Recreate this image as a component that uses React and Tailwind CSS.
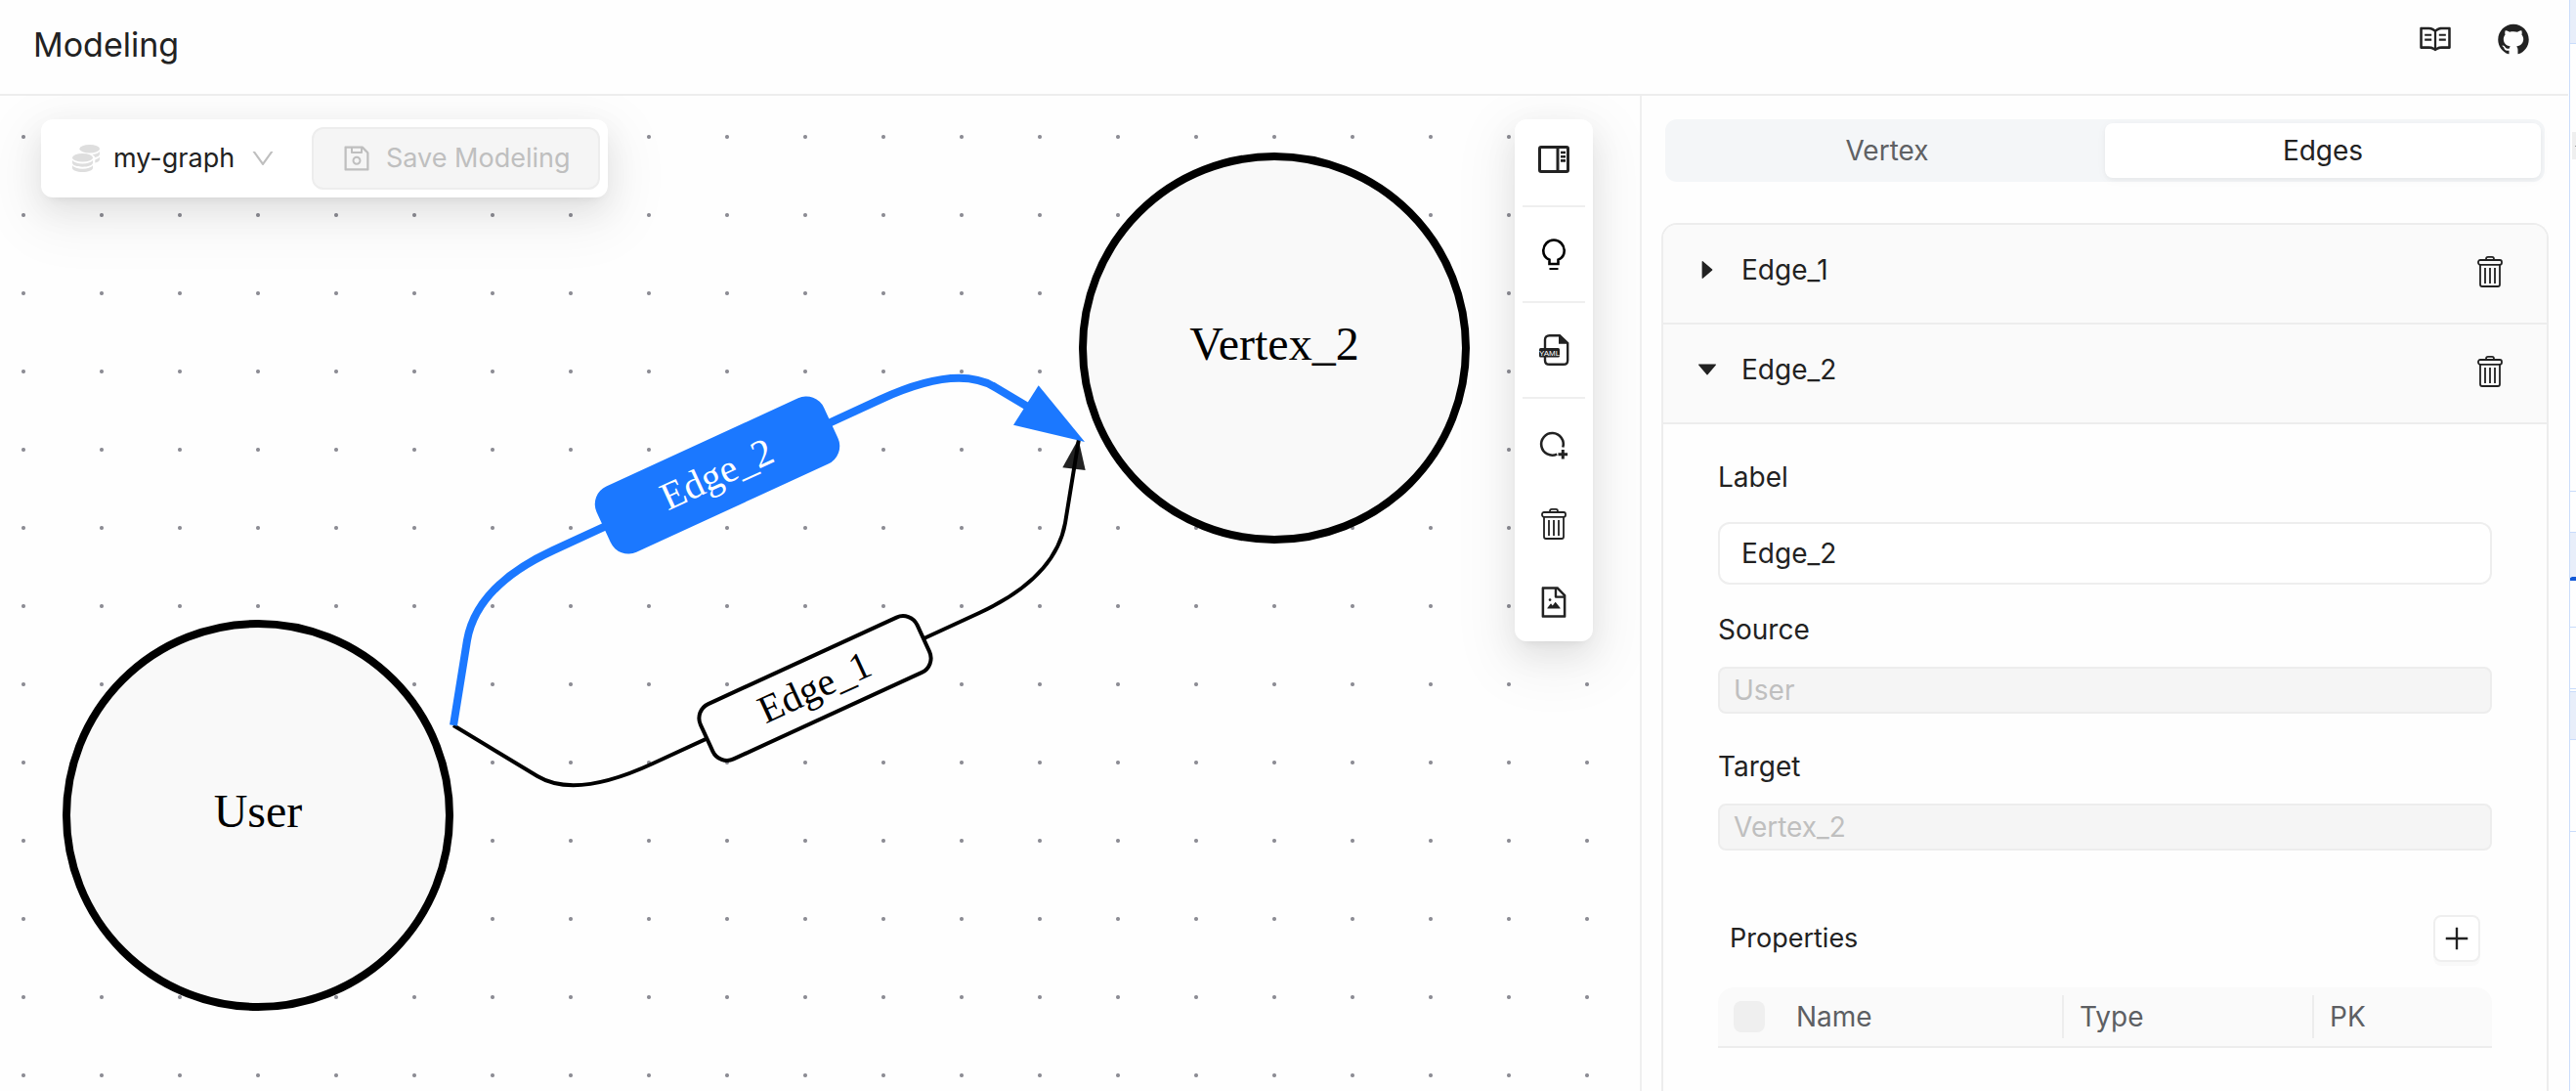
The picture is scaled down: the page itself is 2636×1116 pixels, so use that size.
import React, { useState } from "react";
import {
  AiFillCaretDown,
  AiFillCaretRight,
  AiFillGithub,
  AiOutlineDown,
  AiOutlineFileImage,
  AiOutlinePlus,
  AiOutlineRead,
  AiOutlineSave,
} from "react-icons/ai";

function CoinsIcon({ className }) {
  return (
    <svg viewBox="0 0 28 28" className={className} fill="currentColor" aria-hidden="true">
      <ellipse cx="17.7" cy="4.2" rx="10.3" ry="4.2" />
      <path d="M28 7v2.4c0 1.7-2 3-4.8 3.7-.4-1.200-1.400-2.200-2.700-3C24 9.800 26.800 8.700 28 7z" />
      <path d="M28 12.500v2.400c0 1.700-2 2.900-4.700 3.600v-3.100c2.100-.6 3.800-1.600 4.700-2.900z" />
      <ellipse cx="10.500" cy="13.200" rx="10.500" ry="4.300" />
      <path d="M0 16c1.800 2.200 5.800 3.400 10.500 3.400S19.200 18.200 21 16v2.500c0 2.400-4.700 4.200-10.500 4.200S0 20.900 0 18.500z" />
      <path d="M0 21.300c1.800 2.200 5.800 3.400 10.500 3.400s8.700-1.200 10.500-3.400v2.400c0 2.500-4.700 4.300-10.500 4.300S0 26.200 0 23.700z" />
    </svg>
  );
}

function PanelIcon({ className }) {
  return (
    <svg viewBox="0 0 32 32" className={className} fill="none" stroke="currentColor" aria-hidden="true">
      <rect x="1.500" y="4.500" width="29" height="25" rx="1.500" strokeWidth="3" />
      <path d="M20 4v26" strokeWidth="3" />
      <path d="M23 10h5M23 14.200h5M23 18.400h5" strokeWidth="2.600" />
    </svg>
  );
}

function BulbIcon({ className }) {
  return (
    <svg viewBox="0 0 32 32" className={className} fill="none" stroke="currentColor" strokeWidth="2.600" aria-hidden="true">
      <path d="M11.500 26v-4.300c-3.800-1.700-6.200-5-6.200-9C5.300 6.400 10 1.500 16 1.500s10.700 4.900 10.700 11.200c0 4-2.400 7.300-6.200 9V26z" />
      <path d="M11.500 31h9" strokeWidth="2" />
    </svg>
  );
}

function YamlIcon({ className }) {
  return (
    <svg viewBox="0 0 32 32" className={className} aria-hidden="true">
      <path
        d="M22 1.200H11.500C8.700 1.200 7 2.900 7 5.600v20.800c0 2.700 1.700 4.400 4.500 4.400h14.300c2.700 0 4.400-1.700 4.400-4.400V9z"
        fill="none"
        stroke="currentColor"
        strokeWidth="2.400"
      />
      <path d="M21 1v8.800h9.500z" fill="currentColor" />
      <rect x="1" y="14" width="21" height="9.500" rx="1.500" fill="currentColor" />
      <text x="11.500" y="21.600" textAnchor="middle" fontSize="8" fontFamily="Liberation Sans, sans-serif" fill="#fff">
        YAML
      </text>
    </svg>
  );
}

function AddNodeIcon({ className }) {
  return (
    <svg viewBox="0 0 32 32" className={className} fill="none" stroke="currentColor" aria-hidden="true">
      <path d="M19.200 24.600A11.300 11.300 0 1 1 25.300 17.500" strokeWidth="2.600" />
      <path d="M25.300 20v9.600M20.500 24.800h9.600" strokeWidth="3" />
    </svg>
  );
}

function TrashIcon({ className }) {
  return (
    <svg viewBox="0 0 32 32" className={className} fill="none" stroke="currentColor" strokeWidth="1.800" aria-hidden="true">
      <path d="M12 4V3c0-1.300.8-2.100 2-2.100h4c1.200 0 2 .8 2 2.100v1" />
      <rect x="4" y="4" width="24" height="4.800" rx="2" />
      <path d="M6 8.800V29c0 1.200.8 2 2 2h16c1.200 0 2-.8 2-2V8.800" />
      <path d="M11 12v16M16 12v16M21 12v16" />
    </svg>
  );
}

function Header() {
  return (
    <header className="flex h-[98px] shrink-0 items-center justify-between border-b-2 border-[#ededed] px-[34px] pb-1">
      <h1 className="text-[34px] leading-[48px]">Modeling</h1>
      <nav className="-mt-3 mr-1 flex items-center gap-11">
        <a href="#docs" aria-label="Documentation">
          <AiOutlineRead className="size-9" />
        </a>
        <a href="#github" aria-label="GitHub">
          <AiFillGithub className="size-9" />
        </a>
      </nav>
    </header>
  );
}

function Vertex({ x, y, label }) {
  return (
    <g>
      <circle cx={x} cy={y} r="196" fill="#f9f9f9" stroke="#000" strokeWidth="8" />
      <text x={x} y={y + 12} textAnchor="middle" className="font-['Liberation_Serif',serif] text-[48px]">
        {label}
      </text>
    </g>
  );
}

function EdgeLabel({ x, y, label, selected }) {
  const w = selected ? 256 : 244;
  const h = selected ? 74 : 62;
  return (
    <g transform={`translate(${x} ${y}) rotate(-24.67)`}>
      <rect
        x={-w / 2}
        y={-h / 2}
        width={w}
        height={h}
        rx={selected ? 20 : 16}
        fill={selected ? "#1b78ff" : "#fefefe"}
        stroke={selected ? "none" : "#000"}
        strokeWidth="4"
      />
      <text
        y="12"
        textAnchor="middle"
        fill={selected ? "#fff" : "#000"}
        className="font-['Liberation_Serif',serif] text-[40px]"
      >
        {label}
      </text>
    </g>
  );
}

function Diagram() {
  return (
    <svg className="absolute inset-0 size-full" role="img" aria-label="Graph model">
      <g transform="translate(0 -98)">
        <Vertex x={264} y={834} label="User" />
        <Vertex x={1304} y={356} label="Vertex_2" />
        <path d="M1103.500 449L1087.300 478.300L1110.700 481z" fill="#222" />
        <path
          d="M464 742L550 794Q589 817.500 668 781L1002 627Q1080 591 1090 535L1104 449"
          fill="none"
          stroke="#000"
          strokeWidth="4"
        />
        <path
          d="M464 742L478 655Q488 599 566 563L900 409Q979 372.500 1018 396L1060 421"
          fill="none"
          stroke="#1b78ff"
          strokeWidth="8"
        />
        <path d="M1110 452L1062.700 394.300L1037 434.700z" fill="#1b78ff" />
        <EdgeLabel x={734} y={486} label="Edge_2" selected />
        <EdgeLabel x={834} y={704} label="Edge_1" />
      </g>
    </svg>
  );
}

const floating =
  "absolute rounded-xl bg-white shadow-[0_12px_32px_0_rgba(0,0,0,0.08),0_6px_12px_-8px_rgba(0,0,0,0.12),0_18px_56px_16px_rgba(0,0,0,0.05)]";

function GraphBar() {
  return (
    <div className={`${floating} top-6 left-[42px] flex items-center gap-9 p-2 text-[27px]`}>
      <label className="flex items-center gap-3.5 pl-6">
        <CoinsIcon className="size-7 text-[#dedede]" />
        <select aria-label="Graph" className="appearance-none bg-transparent leading-9 outline-none">
          <option>my-graph</option>
        </select>
        <AiOutlineDown className="pointer-events-none size-7 text-[#bfbfbf]" />
      </label>
      <button
        type="button"
        disabled
        className="flex h-16 items-center gap-3.5 rounded-xl border-2 border-[#ededed] bg-[#f5f5f5] px-7 text-[#bfbfbf]"
      >
        <AiOutlineSave className="size-8" />
        Save Modeling
      </button>
    </div>
  );
}

function ToolButton({ label, children }) {
  return (
    <button type="button" aria-label={label} className="flex size-16 items-center justify-center">
      {children}
    </button>
  );
}

function ToolBar() {
  return (
    <div className={`${floating} top-6 right-12 flex flex-col gap-4 p-2`}>
      <ToolButton label="Toggle panel">
        <PanelIcon className="size-8" />
      </ToolButton>
      <hr className="border-t-2 border-[#efefef]" />
      <ToolButton label="Hints">
        <BulbIcon className="size-8 text-black" />
      </ToolButton>
      <hr className="border-t-2 border-[#efefef]" />
      <ToolButton label="Export YAML">
        <YamlIcon className="size-8" />
      </ToolButton>
      <hr className="border-t-2 border-[#efefef]" />
      <ToolButton label="Add vertex">
        <AddNodeIcon className="size-8" />
      </ToolButton>
      <ToolButton label="Clear">
        <TrashIcon className="size-8" />
      </ToolButton>
      <ToolButton label="Export image">
        <AiOutlineFileImage className="size-9" />
      </ToolButton>
    </div>
  );
}

function EdgeHeader({ name, open }) {
  const Caret = open ? AiFillCaretDown : AiFillCaretRight;
  return (
    <div className="flex h-[102px] items-center justify-between border-b-2 border-[#ededed] bg-[#fafafa] pr-[42px] pb-1 pl-8">
      <button type="button" aria-expanded={open} className="-mt-1 flex items-center gap-[22px]">
        <Caret className="size-[26px]" />
        {name}
      </button>
      <button type="button" aria-label={`Delete ${name}`}>
        <TrashIcon className="size-8" />
      </button>
    </div>
  );
}

function Properties() {
  return (
    <section className="mt-[66px]">
      <div className="flex items-center justify-between px-3">
        <h2 className="text-[27px]">Properties</h2>
        <button
          type="button"
          aria-label="Add property"
          className="flex size-12 items-center justify-center rounded-lg border-2 border-[#efefef] bg-white shadow-[0_4px_0_rgba(0,0,0,0.02)]"
        >
          <AiOutlinePlus className="size-8" />
        </button>
      </div>
      <table className="mt-[26px] w-full table-fixed border-separate border-spacing-0 text-left text-[#5d5f63]">
        <thead>
          <tr className="h-[62px] *:border-b-2 *:border-[#ededed] *:bg-[#fafafa] *:p-0 *:font-normal">
            <th className="w-16 rounded-tl-2xl">
              <input
                type="checkbox"
                disabled
                aria-label="Select all"
                className="ml-4 block size-8 appearance-none rounded-lg bg-[#efefef]"
              />
            </th>
            <th className="w-[290px]">
              <div className="h-11 border-r-2 border-[#ededed] pl-4 leading-[44px]">Name</div>
            </th>
            <th className="w-64">
              <div className="h-11 border-r-2 border-[#ededed] pl-4 leading-[44px]">Type</div>
            </th>
            <th className="rounded-tr-2xl">
              <div className="pl-4 leading-[44px]">PK</div>
            </th>
          </tr>
        </thead>
      </table>
    </section>
  );
}

function EdgeForm() {
  const [label, setLabel] = useState("Edge_2");
  return (
    <form className="flex flex-col px-14 pt-8">
      <label htmlFor="edge-label" className="leading-[44px]">
        Label
      </label>
      <input
        id="edge-label"
        value={label}
        onChange={(e) => setLabel(e.target.value)}
        className="mt-6 h-16 rounded-xl border-2 border-[#eeeeee] bg-white px-[22px] outline-none"
      />
      <label htmlFor="edge-source" className="mt-6 leading-[44px]">
        Source
      </label>
      <input
        id="edge-source"
        disabled
        value="User"
        className="mt-4 h-12 rounded-lg border-2 border-[#ededed] bg-[#f5f5f5] px-3.5 text-[#bfbfbf]"
      />
      <label htmlFor="edge-target" className="mt-8 leading-[44px]">
        Target
      </label>
      <input
        id="edge-target"
        disabled
        value="Vertex_2"
        className="mt-4 h-12 rounded-lg border-2 border-[#ededed] bg-[#f5f5f5] px-3.5 text-[#bfbfbf]"
      />
      <Properties />
    </form>
  );
}

function SidePanel() {
  return (
    <aside className="flex w-[950px] shrink-0 flex-col border-l-2 border-[#efefef] px-5 pt-6 text-[28px]">
      <div role="tablist" className="mx-1 flex h-16 rounded-xl bg-[#f4f6f8] p-1">
        <button type="button" role="tab" aria-selected="false" className="flex-1 rounded-lg text-[#5f6164]">
          Vertex
        </button>
        <button
          type="button"
          role="tab"
          aria-selected="true"
          className="flex-1 rounded-lg bg-white shadow-[0_2px_4px_rgba(0,0,0,0.04),0_2px_12px_rgba(0,0,0,0.03)]"
        >
          Edges
        </button>
      </div>
      <div className="mt-[42px] flex-1 overflow-hidden rounded-t-2xl border-2 border-b-0 border-[#ededed]">
        <EdgeHeader name="Edge_1" open={false} />
        <EdgeHeader name="Edge_2" open />
        <EdgeForm />
      </div>
    </aside>
  );
}

/* Left edge of the neighbouring sheet, cut off by the window. */
function NeighbourSheet() {
  return (
    <svg className="h-full w-2 shrink-0" aria-hidden="true">
      <g fill="#e8eefa">
        <rect x="2" y="0" width="6" height="44" />
        <rect x="2" y="544" width="6" height="46" />
        <rect x="2" y="707" width="6" height="49" />
      </g>
      <rect x="4" y="135" width="4" height="28" fill="#efefef" />
      <rect x="7" y="149" width="1" height="1" fill="#999" />
      <g fill="#c9dcfb">
        <rect x="1" y="0" width="1" height="100%" />
        <rect x="2" y="44" width="6" height="1" />
        <rect x="2" y="502" width="6" height="1" />
        <rect x="2" y="544" width="6" height="1" />
        <rect x="2" y="641" width="6" height="1" />
        <rect x="2" y="704" width="6" height="1" />
        <rect x="2" y="707" width="6" height="1" />
        <rect x="2" y="756" width="6" height="1" />
        <rect x="2" y="850" width="6" height="1" />
      </g>
      <path d="M2 594v-3l2-1h4v4z" fill="#1259d6" />
    </svg>
  );
}

export default function App() {
  return (
    <div className="flex h-screen overflow-hidden bg-[#fefefe] font-['Inter',sans-serif] text-[#222222]">
      <div className="flex min-w-0 flex-1 flex-col">
        <Header />
        <div className="flex min-h-0 flex-1">
          <main className="relative min-w-0 flex-1 overflow-hidden bg-[radial-gradient(circle,#8c8c94_1.500px,transparent_2.500px)] bg-[length:80px_80px] bg-[position:-16px_2px]">
            <Diagram />
            <GraphBar />
            <ToolBar />
          </main>
          <SidePanel />
        </div>
      </div>
      <NeighbourSheet />
    </div>
  );
}
